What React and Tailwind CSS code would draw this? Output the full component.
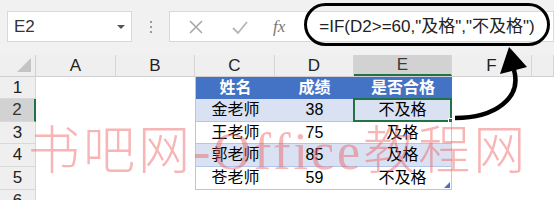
import React from 'react'

const cols = ['A', 'B', 'C', 'D', 'E', 'F', '']
const rows = [
  { n: 1, h: 'h-[22px]', cells: ['姓名', '成绩', '是否合格'], head: true },
  { n: 2, h: 'h-[23px]', cells: ['金老师', '38', '不及格'], band: true, sel: true },
  { n: 3, h: 'h-[22px]', cells: ['王老师', '75', '及格'] },
  { n: 4, h: 'h-[23px]', cells: ['郭老师', '85', '及格'], band: true },
  { n: 5, h: 'h-[23px]', cells: ['苍老师', '59', '不及格'], last: true },
  { n: 6, h: 'h-[22px]', cells: null },
]

const widths = ['w-[80px]', 'w-[79px]', 'w-[80px]', 'w-[79px]', 'w-[98px]', 'w-[80px]', 'flex-1']

function HeaderRow() {
  return (
    <div className="flex h-[22px] bg-[#efefef] border-b border-[#d0d0d0]">
      <div className="w-[36px] relative border-r border-[#d0d0d0]">
        <div className="absolute right-[4px] bottom-[4px] w-0 h-0 border-l-[14px] border-l-transparent border-b-[14px] border-b-[#c4c4c4]" />
      </div>
      {cols.map((c, i) => (
        <div
          key={i}
          className={`${widths[i]} flex items-center justify-center text-[17px] border-r border-[#d6d6d6] ${
            c === 'E' ? 'bg-[#d2d2d2] text-[#3a3a3a] border-b-2 border-b-[#217346]' : 'text-[#222]'
          }`}
        >
          {c}
        </div>
      ))}
    </div>
  )
}

function GridRow({ row }) {
  const tableCell = (i) => {
    if (!row.cells || i < 2 || i > 4) return null
    return row.cells[i - 2]
  }
  return (
    <div className={`flex ${row.h}`}>
      <div
        className={`w-[36px] flex items-center justify-center text-[17px] border-b border-[#d8d8d8] ${
          row.sel ? 'bg-[#d2d2d2] text-[#333] border-r-2 border-r-[#217346]' : 'bg-[#efefef] text-[#222] border-r border-[#d0d0d0]'
        }`}
      >
        {row.n}
      </div>
      {widths.map((w, i) => {
        const inTable = row.cells && i >= 2 && i <= 4
        let cls = 'bg-white'
        if (inTable) {
          if (row.head) cls = 'bg-[#4472c4] text-white font-bold'
          else cls = `${row.band ? 'bg-[#d9e1f2]' : 'bg-white'} text-black border-b border-[#b4c6e7]`
          if (i === 2) cls += ' border-l border-l-[#b4c6e7]'
          if (i === 4 && !row.head) cls += ' border-r border-r-[#c8c8c8]'
        }
        return (
          <div key={i} className={`${w} relative flex items-center justify-center text-[16px] ${cls}`}>
            {tableCell(i)}
            {row.sel && i === 4 && (
              <>
                <div className="absolute -left-px -top-px -right-px -bottom-px border-2 border-[#217346]" />
                <div className="absolute -right-[3px] -bottom-[3px] w-[6px] h-[6px] bg-[#217346] border border-white" />
              </>
            )}
            {row.last && i === 4 && (
              <div className="absolute right-[1px] bottom-[1px] w-0 h-0 border-l-[6px] border-l-transparent border-b-[6px] border-b-[#4472c4]" />
            )}
          </div>
        )
      })}
    </div>
  )
}

export default function App() {
  return (
    <div className="relative w-[554px] h-[200px] overflow-hidden bg-white font-['Liberation_Sans','Noto_Sans_CJK_SC',sans-serif]">
      {/* formula bar */}
      <div className="h-[55px] bg-[#f1f1f1] flex items-start pt-[11px] pl-[7px]">
        <div className="w-[125px] h-[31px] bg-white border border-[#d8d8d8] flex items-center justify-between pl-[6px] pr-[6px]">
          <span className="text-[17px] text-[#333]">E2</span>
          <span className="w-0 h-0 border-l-[4px] border-r-[4px] border-t-[4px] border-l-transparent border-r-transparent border-t-[#555]" />
        </div>
        <div className="w-[37px] h-[31px] flex flex-col items-center justify-center gap-[3px]">
          <span className="w-[2px] h-[2px] bg-[#9a9a9a]" />
          <span className="w-[2px] h-[2px] bg-[#9a9a9a]" />
          <span className="w-[2px] h-[2px] bg-[#9a9a9a]" />
        </div>
        <div className="flex-1 h-[31px] bg-white border border-[#d8d8d8] flex items-center">
          <svg width="16" height="16" viewBox="0 0 16 16" className="ml-[18px]">
            <path d="M2 2 L14 14 M14 2 L2 14" stroke="#a8a8a8" strokeWidth="1.6" fill="none" />
          </svg>
          <svg width="18" height="16" viewBox="0 0 18 16" className="ml-[27px]">
            <path d="M2 9 L7 14 L16 3" stroke="#b4b4b4" strokeWidth="1.8" fill="none" />
          </svg>
          <span className="ml-[24px] text-[17px] italic text-[#777] font-['Liberation_Serif',serif]">fx</span>
          <span className="ml-[34px] text-[17px] text-[#222] whitespace-nowrap">=IF(D2&gt;=60,"及格","不及格")</span>
        </div>
      </div>

      {/* grid */}
      <HeaderRow />
      {rows.map((r) => (
        <GridRow key={r.n} row={r} />
      ))}

      {/* callout oval and arrow */}
      <div className="absolute left-[304px] top-[3px] w-[246px] h-[43px] rounded-full border-[3px] border-black" />
      <svg className="absolute left-0 top-0" width="554" height="200" viewBox="0 0 554 200">
        <path d="M455 118 C 495 118, 522 98, 514 70" stroke="#000" strokeWidth="4.5" fill="none" />
        <polygon points="509,47 500,74 527,67" fill="#000" />
      </svg>

      {/* watermark */}
      <div className="absolute left-[28px] top-[126px] text-[52px] leading-none whitespace-nowrap text-[#ee5a5a]/45 tracking-[3px] font-['Liberation_Serif','Noto_Sans_CJK_SC',serif] font-light pointer-events-none">
        书吧网-Office教程网
      </div>
    </div>
  )
}
